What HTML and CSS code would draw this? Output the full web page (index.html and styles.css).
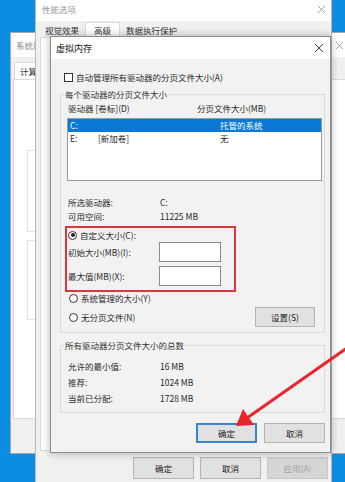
FILE: index.html
```html
<!DOCTYPE html>
<html lang="zh-CN">
<head>
  <meta charset="UTF-8">
  <meta name="viewport" content="width=device-width, initial-scale=1.0">
  <title>虚拟内存</title>

  <!-- Estilos CSS -->
  <link rel="stylesheet" href="styles.css">
</head>
<body>

  <div class="desktop">

    <!-- 系统属性 (fundo) -->
    <div class="win sys">
      <div class="titlebar sys-title">
        <span>系统属性</span>
        <svg class="close" viewBox="0 0 10 10"><path d="M1 1L9 9M9 1L1 9"/></svg>
      </div>
      <div class="tabs sys-tabs">
        <span class="tab active">计算机名</span>
      </div>
      <div class="panel sys-panel">
        <div class="sys-group g1"></div>
        <div class="sys-group g2"></div>
      </div>
      <div class="sys-footer"></div>
    </div>

    <!-- 性能选项 -->
    <div class="win perf">
      <div class="titlebar perf-title">
        <span>性能选项</span>
        <svg class="close" viewBox="0 0 10 10"><path d="M1 1L9 9M9 1L1 9"/></svg>
      </div>
      <div class="tabs perf-tabs">
        <span class="tab">视觉效果</span>
        <span class="tab active">高级</span>
        <span class="tab">数据执行保护</span>
      </div>
      <div class="panel perf-panel"></div>
      <div class="perf-footer">
        <button class="btn">确定</button>
        <button class="btn">取消</button>
        <button class="btn" disabled>应用(A)</button>
      </div>
    </div>

    <!-- 虚拟内存 -->
    <div class="win vm">
      <div class="titlebar vm-title">
        <span>虚拟内存</span>
        <svg class="close" viewBox="0 0 10 10"><path d="M1 1L9 9M9 1L1 9"/></svg>
      </div>

      <div class="vm-body">
        <label class="check-row"><span class="checkbox"></span>自动管理所有驱动器的分页文件大小(A)</label>

        <fieldset class="group">
          <legend>每个驱动器的分页文件大小</legend>

          <div class="list-head">
            <span class="col-drive">驱动器 [卷标](D)</span>
            <span>分页文件大小(MB)</span>
          </div>

          <div class="listbox">
            <div class="list-row selected">
              <span class="col-letter">C:</span>
              <span class="col-label"></span>
              <span>托管的系统</span>
            </div>
            <div class="list-row">
              <span class="col-letter">E:</span>
              <span class="col-label">[新加卷]</span>
              <span>无</span>
            </div>
          </div>

          <div class="info">
            <div class="info-row"><span class="key">所选驱动器:</span><span>C:</span></div>
            <div class="info-row"><span class="key">可用空间:</span><span>11225 MB</span></div>
          </div>

          <div class="mark">
            <div class="radio-row"><span class="radio checked"></span>自定义大小(C):</div>
            <div class="size-row">
              <span class="size-label">初始大小(MB)(I):</span>
              <span class="textbox"></span>
            </div>
            <div class="size-row second">
              <span class="size-label">最大值(MB)(X):</span>
              <span class="textbox"></span>
            </div>
          </div>

          <div class="radio-row plain"><span class="radio"></span>系统管理的大小(Y)</div>
          <div class="last-row">
            <div class="radio-row plain"><span class="radio"></span>无分页文件(N)</div>
            <button class="btn set-btn">设置(S)</button>
          </div>
        </fieldset>

        <fieldset class="group total">
          <legend>所有驱动器分页文件大小的总数</legend>
          <div class="total-rows">
            <div class="info-row wide"><span class="key">允许的最小值:</span><span>16 MB</span></div>
            <div class="info-row wide"><span class="key">推荐:</span><span>1024 MB</span></div>
            <div class="info-row wide"><span class="key">当前已分配:</span><span>1728 MB</span></div>
          </div>
        </fieldset>

        <div class="vm-buttons">
          <button class="btn focus">确定</button>
          <button class="btn">取消</button>
        </div>
      </div>
    </div>

    <!-- seta vermelha -->
    <svg class="arrow" viewBox="0 0 345 482">
      <line x1="347" y1="348" x2="247" y2="418" />
      <polygon points="236,426 243,409 254,425" />
    </svg>

  </div>

</body>
</html>
```

FILE: styles.css
```css
body {
  margin: 0;
  background-color: #0b8de2;
  font-family: "Noto Sans CJK SC", "Noto Sans", sans-serif;
  font-size: 8.5px;
  color: #2a2a2a;
}

.desktop {
  position: relative;
  width: 345px;
  height: 482px;
  overflow: hidden;
}

.win {
  position: absolute;
  box-sizing: border-box;
  display: flex;
  flex-direction: column;
  background-color: #f0f0f0;
}

.titlebar {
  display: flex;
  justify-content: space-between;
  align-items: center;
  background-color: #fff;
  flex-shrink: 0;
}

.close {
  width: 9px;
  height: 9px;
  stroke: #444;
  stroke-width: 1;
  fill: none;
}

.tabs {
  display: flex;
  align-items: flex-end;
  flex-shrink: 0;
}

.tab {
  padding: 0 4px;
  line-height: 13px;
  color: #333;
}

.tab.active {
  background-color: #fff;
  border: 1px solid #d9d9d9;
  border-bottom: none;
  line-height: 14px;
}

.panel {
  background-color: #fff;
  border: 1px solid #d9d9d9;
  flex: 1;
}

/* 系统属性 */
.sys {
  left: 10px;
  top: 32px;
  width: 344px;
  height: 422px;
  border: 1px solid #a8a8a8;
}

.sys-title {
  height: 24px;
  padding: 0 9px 0 5px;
  color: #8a8a8a;
}

.sys-title .close {
  stroke: #999;
}

.sys-tabs {
  height: 22px;
  padding-left: 3px;
}

.sys-tabs .tab.active {
  padding: 0 5px;
  line-height: 16px;
}

.sys-panel {
  margin: 0 3px 0 2px;
  padding: 70px 0 0 13px;
}

.sys-group {
  border: 1px solid #e2e2e2;
  width: 200px;
}

.sys-group.g1 {
  height: 80px;
}

.sys-group.g2 {
  height: 78px;
  margin-top: 8px;
}

.sys-footer {
  height: 34px;
  flex-shrink: 0;
}

/* 性能选项 */
.perf {
  left: 35px;
  top: -4px;
  width: 297px;
  height: 496px;
  border: 1px solid #b8b8b8;
}

.perf-title {
  height: 24px;
  padding: 0 5px 0 6px;
  color: #9a9a9a;
}

.perf-title .close {
  stroke: #9a9a9a;
}

.perf-tabs {
  height: 16px;
  padding-left: 5px;
}

.perf-tabs .tab.active {
  padding: 0 8px;
  margin: 0 2px;
}

.perf-panel {
  margin: 0 3px 0 4px;
}

.perf-footer {
  display: flex;
  justify-content: flex-end;
  gap: 6px;
  padding: 6px 3px 12px 0;
  flex-shrink: 0;
}

.perf-footer .btn {
  width: 61px;
  height: 22px;
}

/* botões */
.btn {
  box-sizing: border-box;
  width: 61px;
  height: 20px;
  padding: 0;
  background-color: #e1e1e1;
  border: 1px solid #b4b4b4;
  font-family: inherit;
  font-size: 8.5px;
  color: #222;
}

.btn:disabled {
  background-color: #d6d6d6;
  border-color: #c8c8c8;
  color: #a0a0a0;
}

.btn.focus {
  border: 2px solid #3b84d2;
}

/* 虚拟内存 */
.vm {
  left: 50px;
  top: 36px;
  width: 281px;
  height: 417px;
  border: 1px solid #8c8c8c;
  box-shadow: 0 0 8px rgba(0, 0, 0, 0.3);
}

.vm-title {
  height: 22px;
  padding: 0 6px 0 5px;
  font-size: 9px;
  color: #111;
}

.vm-title .close {
  width: 10px;
  height: 10px;
}

.vm-body {
  display: flex;
  flex-direction: column;
  padding: 0 5px 9px 9px;
  background-color: #f2f2f2;
  flex: 1;
}

.check-row {
  display: flex;
  align-items: center;
  margin-top: 12px;
  padding-left: 4px;
  line-height: 12px;
}

.checkbox {
  box-sizing: border-box;
  width: 9px;
  height: 9px;
  border: 1px solid #333;
  background-color: #fff;
  margin-right: 3px;
}

.group {
  margin: 5px 0 0;
  padding: 0 2px 5px 6px;
  border: 1px solid #dadada;
  min-width: 0;
}

.group legend {
  padding: 0 1px;
  margin-left: -3px;
  line-height: 12px;
  color: #333;
}

.list-head {
  display: flex;
  margin-top: 2px;
  line-height: 12px;
  padding-left: 1px;
}

.col-drive {
  width: 129px;
}

.listbox {
  box-sizing: border-box;
  height: 63px;
  margin-top: 4px;
  background-color: #fff;
  border: 1px solid #9a9a9a;
}

.list-row {
  display: flex;
  height: 13px;
  line-height: 13px;
  padding-left: 2px;
}

.list-row.selected {
  background-color: #0a78d6;
  color: #fff;
}

.col-letter {
  width: 28px;
}

.col-label {
  width: 122px;
}

.info {
  margin-top: 14px;
}

.info-row {
  display: flex;
  line-height: 14px;
  padding-left: 1px;
}

.info-row .key {
  width: 92px;
}

.info-row.wide {
  line-height: 16px;
}

.mark {
  width: 171px;
  box-sizing: border-box;
  margin: 3px 0 0 -2px;
  padding: 1px 0 4px;
  border: 2px solid #e0353c;
}

.radio-row {
  display: flex;
  align-items: center;
  line-height: 12px;
  padding-left: 1px;
}

.radio-row.plain {
  padding-left: 2px;
}

.radio {
  box-sizing: border-box;
  position: relative;
  width: 9px;
  height: 9px;
  border: 1px solid #333;
  border-radius: 50%;
  background-color: #fff;
  margin-right: 3px;
}

.radio.checked::after {
  content: "";
  position: absolute;
  left: 1.5px;
  top: 1.5px;
  width: 4px;
  height: 4px;
  border-radius: 50%;
  background-color: #222;
}

.size-row {
  display: flex;
  align-items: center;
  height: 20px;
  margin-top: 1px;
  padding-left: 1px;
}

.size-row.second {
  margin-top: 4px;
}

.size-label {
  width: 91px;
}

.textbox {
  box-sizing: border-box;
  width: 62px;
  height: 20px;
  background-color: #fff;
  border: 1px solid #8a8a8a;
}

.last-row {
  display: flex;
  justify-content: space-between;
  align-items: center;
  height: 20px;
  margin-top: 3px;
}

.set-btn {
  width: 60px;
  margin-right: 7px;
}

.total {
  margin-top: 6px;
  padding-bottom: 6px;
}

.total-rows {
  margin-top: 7px;
}

.vm-buttons {
  display: flex;
  justify-content: flex-end;
  gap: 7px;
  margin-top: 10px;
}

.arrow {
  position: absolute;
  left: 0;
  top: 0;
  width: 345px;
  height: 482px;
  pointer-events: none;
}

.arrow line {
  stroke: #e8262c;
  stroke-width: 3;
}

.arrow polygon {
  fill: #e8262c;
}
```
